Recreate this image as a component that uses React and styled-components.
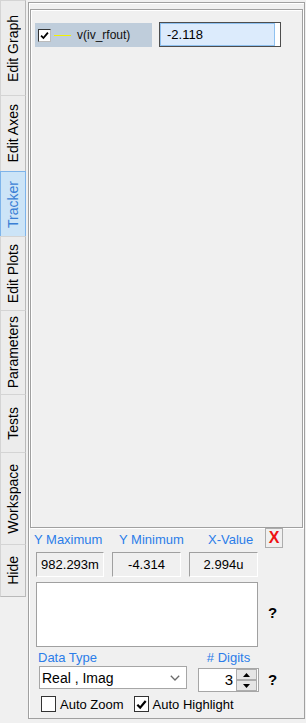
import React from 'react';
import styled, { createGlobalStyle } from 'styled-components';

const Global = createGlobalStyle`
  html, body { margin: 0; padding: 0; background: #f0f0f0; }
  body { font-family: "Liberation Sans", Arial, sans-serif; color: #000; }
`;

const BLUE = '#2b7de9';

const Root = styled.div`
  display: flex;
  width: 306px;
  height: 723px;
  overflow: hidden;
  background: #f0f0f0;
`;

const TabColumn = styled.div`
  display: flex;
  flex-direction: column;
  width: 26px;
  flex-shrink: 0;
`;

const Tab = styled.div`
  box-sizing: border-box;
  height: ${p => p.$h}px;
  width: 26px;
  display: flex;
  align-items: center;
  justify-content: center;
  background: ${p => (p.$active ? '#cce4f7' : '#ececec')};
  border: 1px solid ${p => (p.$active ? '#7eb4ea' : '#d4d4d4')};
  border-right-color: ${p => (p.$active ? '#7eb4ea' : '#b9b9b9')};
  border-bottom-color: ${p => (p.$active ? '#7eb4ea' : '#b9b9b9')};
  margin-top: ${p => (p.$first ? 0 : -1)}px;
  & > span {
    writing-mode: vertical-rl;
    transform: rotate(180deg);
    font-size: 14px;
    line-height: 16px;
    white-space: nowrap;
    color: ${p => (p.$active ? '#3a7fd5' : '#000')};
  }
`;

const Frame = styled.div`
  box-sizing: border-box;
  margin: 2px 0 0 2px;
  width: 277px;
  height: 717px;
  border: 1px solid #a0a0a0;
  box-shadow: inset 1px 1px 0 #fff;
  display: flex;
  flex-direction: column;
`;

const ListBox = styled.div`
  box-sizing: border-box;
  margin: 6px 1px 0 1px;
  height: 519px;
  border: 1px solid #a0a0a0;
  box-shadow: inset 1px 1px 0 #fff, 1px 1px 0 #fff;
  padding: 13px 0 0 4px;
`;

const TraceRow = styled.div`
  display: flex;
  align-items: flex-start;
  gap: 7px;
`;

const TraceName = styled.div`
  box-sizing: border-box;
  width: 117px;
  height: 24px;
  background: #bfcddb;
  display: flex;
  align-items: center;
  padding-left: 3px;
  font-size: 12px;
  color: #111;
`;

const SmallCheck = styled.span`
  box-sizing: border-box;
  width: 13px;
  height: 13px;
  background: #fff;
  border: 1px solid #333;
  border-right-color: #bbb;
  border-bottom-color: #bbb;
  display: flex;
  align-items: center;
  justify-content: center;
`;

const ColorLine = styled.span`
  width: 17px;
  height: 1px;
  background: ${p => p.$color};
  margin: 0 6px 0 3px;
`;

const ValueInput = styled.div`
  box-sizing: border-box;
  margin-top: -1px;
  width: 122px;
  height: 25px;
  border: 1px solid #4d4d4d;
  display: flex;
  background: #fff;
`;

const Selection = styled.div`
  flex: 1;
  box-sizing: border-box;
  background: #dcebfc;
  border: 1px solid #8fc1f0;
  padding-left: 6px;
  font-size: 13px;
  line-height: 21px;
  color: #000;
`;

const Tail = styled.div`
  width: 5px;
`;

const Bottom = styled.div`
  padding-left: 7px;
`;

const TopGrid = styled.div`
  display: grid;
  grid-template-columns: 68px 69px 69px 24px;
  grid-template-rows: 24px 25px 70px;
  column-gap: 8px;
`;

const Label = styled.div`
  font-size: 13px;
  line-height: ${p => p.$lh || 24}px;
  color: ${BLUE};
  white-space: nowrap;
  margin-left: ${p => p.$indent || 0}px;
  text-align: ${p => (p.$center ? 'center' : 'left')};
`;

const CloseButton = styled.div`
  box-sizing: border-box;
  width: 18px;
  height: 20px;
  margin-left: -1px;
  border: 1px solid #adadad;
  background: #f0f0f0;
  color: #ee1111;
  font-weight: bold;
  font-size: 16px;
  line-height: 18px;
  text-align: center;
`;

const ValueBox = styled.div`
  box-sizing: border-box;
  height: 25px;
  border-top: 1px solid #a0a0a0;
  border-left: 1px solid #a0a0a0;
  border-right: 1px solid #fff;
  border-bottom: 1px solid #fff;
  font-size: 13px;
  line-height: 23px;
  text-align: center;
  white-space: nowrap;
`;

const TextArea = styled.div`
  grid-column: 1 / 4;
  box-sizing: border-box;
  margin-top: 5px;
  height: 65px;
  background: #fff;
  border: 1px solid #a0a0a0;
`;

const Help = styled.div`
  font-size: 15px;
  font-weight: bold;
  align-self: center;
  justify-self: start;
  margin-left: ${p => p.$indent || 0}px;
  margin-top: ${p => p.$dy || 0}px;
`;

const LowerGrid = styled.div`
  display: grid;
  grid-template-columns: 154px 61px auto;
  grid-template-rows: 16px 26px;
  column-gap: 8px;
  margin-top: 3px;
`;

const Select = styled.div`
  box-sizing: border-box;
  margin-left: 3px;
  width: 148px;
  height: 23px;
  background: #fff;
  border: 1px solid #a6a6a6;
  display: flex;
  align-items: center;
  justify-content: space-between;
  padding: 0 6px 0 2px;
  font-size: 14px;
`;

const Spin = styled.div`
  box-sizing: border-box;
  margin-top: 2px;
  width: 61px;
  height: 24px;
  background: #fff;
  border: 1px solid #a6a6a6;
  display: flex;
  align-items: flex-start;
  justify-content: flex-end;
  padding-right: 1px;
`;

const SpinValue = styled.span`
  font-size: 15px;
  line-height: 22px;
  margin-right: 3px;
`;

const SpinButtons = styled.div`
  display: flex;
  flex-direction: column;
  gap: 0;
  margin-top: 0;
`;

const SpinButton = styled.div`
  box-sizing: border-box;
  width: 21px;
  height: 11px;
  background: #e6e6e6;
  border: 1px solid #adadad;
  display: flex;
  align-items: center;
  justify-content: center;
`;

const CheckRow = styled.div`
  display: flex;
  align-items: center;
  gap: 10px;
  margin-top: 4px;
  padding-left: 5px;
`;

const CheckItem = styled.label`
  display: flex;
  align-items: center;
  gap: 4px;
  font-size: 13px;
`;

const BigCheck = styled.span`
  box-sizing: border-box;
  width: 15px;
  height: 16px;
  background: #fff;
  border: 1px solid #333;
  display: flex;
  align-items: center;
  justify-content: center;
`;

const tabs = [
  { label: 'Edit Graph', h: 96 },
  { label: 'Edit Axes', h: 77 },
  { label: 'Tracker', h: 66, active: true },
  { label: 'Edit Plots', h: 75 },
  { label: 'Parameters', h: 85 },
  { label: 'Tests', h: 59 },
  { label: 'Workspace', h: 93 },
  { label: 'Hide', h: 53 },
];

const CheckGlyph = ({ size = 9 }) => (
  <svg width={size} height={size} viewBox="0 0 10 10">
    <path d="M1.2 5.2 L3.8 7.8 L8.8 1.8" fill="none" stroke="#000" strokeWidth="2" />
  </svg>
);

export default function App() {
  return (
    <>
      <Global />
      <Root>
        <TabColumn>
          {tabs.map((t, i) => (
            <Tab key={t.label} $h={t.h} $active={t.active} $first={i === 0}>
              <span>{t.label}</span>
            </Tab>
          ))}
        </TabColumn>
        <Frame>
          <ListBox>
            <TraceRow>
              <TraceName>
                <SmallCheck>
                  <CheckGlyph size={9} />
                </SmallCheck>
                <ColorLine $color="#f2f200" />
                <span>v(iv_rfout)</span>
              </TraceName>
              <ValueInput>
                <Selection>-2.118</Selection>
                <Tail />
              </ValueInput>
            </TraceRow>
          </ListBox>
          <Bottom>
            <TopGrid>
              <Label $indent={-2}>Y Maximum</Label>
              <Label $indent={7}>Y Minimum</Label>
              <Label $indent={19}>X-Value</Label>
              <CloseButton>X</CloseButton>
              <ValueBox>982.293m</ValueBox>
              <ValueBox>-4.314</ValueBox>
              <ValueBox>2.994u</ValueBox>
              <div />
              <TextArea />
              <Help $indent={2} $dy={1}>?</Help>
            </TopGrid>
            <LowerGrid>
              <Label $lh={16} $indent={2}>Data Type</Label>
              <Label $lh={16} $center>
                # Digits
              </Label>
              <div />
              <Select>
                <span>Real , Imag</span>
                <svg width="10" height="6" viewBox="0 0 10 6">
                  <path d="M0.8 0.8 L5 5 L9.2 0.8" fill="none" stroke="#6a6a6a" strokeWidth="1.3" />
                </svg>
              </Select>
              <Spin>
                <SpinValue>3</SpinValue>
                <SpinButtons>
                  <SpinButton>
                    <svg width="7" height="4" viewBox="0 0 7 4">
                      <path d="M0 4 L3.5 0 L7 4 Z" fill="#000" />
                    </svg>
                  </SpinButton>
                  <SpinButton>
                    <svg width="7" height="4" viewBox="0 0 7 4">
                      <path d="M0 0 L3.5 4 L7 0 Z" fill="#000" />
                    </svg>
                  </SpinButton>
                </SpinButtons>
              </Spin>
              <Help $indent={1}>?</Help>
            </LowerGrid>
            <CheckRow>
              <CheckItem>
                <BigCheck />
                Auto Zoom
              </CheckItem>
              <CheckItem>
                <BigCheck>
                  <CheckGlyph size={11} />
                </BigCheck>
                Auto Highlight
              </CheckItem>
            </CheckRow>
          </Bottom>
        </Frame>
      </Root>
    </>
  );
}
